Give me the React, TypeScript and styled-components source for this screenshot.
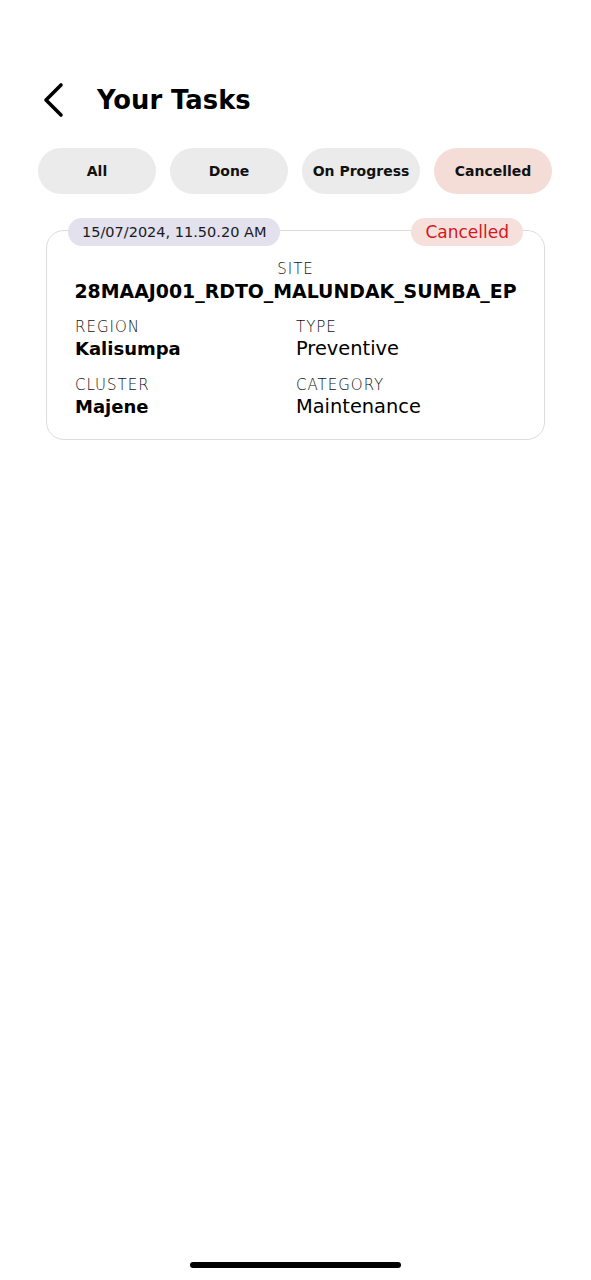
import React from "react";
import styled, { createGlobalStyle } from "styled-components";

const Global = createGlobalStyle`
  html, body { margin: 0; padding: 0; background: #ffffff; }
  body { font-family: "DejaVu Sans", "Liberation Sans", sans-serif; color: #000; }
`;

const Page = styled.div`
  width: 591px;
  height: 1280px;
  position: relative;
  display: flex;
  flex-direction: column;
  background: #fff;
  overflow: hidden;
`;

const Header = styled.div`
  display: flex;
  align-items: center;
  height: 40px;
  margin-top: 80px;
  padding-left: 40px;
  gap: 31px;
`;

const BackButton = styled.button`
  border: none;
  background: none;
  padding: 0;
  width: 26px;
  height: 40px;
  display: flex;
  align-items: center;
  justify-content: center;
`;

const Title = styled.h1`
  margin: 0;
  font-size: 25.8px;
  font-weight: 700;
`;

const Tabs = styled.div`
  display: flex;
  gap: 14px;
  padding: 0 39px 0 38px;
  margin-top: 28px;
`;

const Tab = styled.button<{ $active?: boolean }>`
  flex: 1;
  height: 46px;
  border: none;
  border-radius: 23px;
  background: ${(p) => (p.$active ? "#f3ddd6" : "#ebebeb")};
  font-family: "DejaVu Sans", sans-serif;
  font-weight: 700;
  font-size: 14px;
  color: #111;
  padding: 0;
`;

const Card = styled.div`
  margin: 36px 46px 0 46px;
  border: 1.5px solid #dcdcdc;
  border-radius: 18px;
  padding: 0 28px 20px 28px;
  display: flex;
  flex-direction: column;
`;

const CardTop = styled.div`
  display: flex;
  justify-content: space-between;
  margin: -13px -7px 0 -7px;
`;

const Pill = styled.span<{ $tone: "date" | "cancel" }>`
  height: 28px;
  border-radius: 14px;
  display: inline-flex;
  align-items: center;
  padding: 0 14px;
  background: ${(p) => (p.$tone === "date" ? "#e2e1ed" : "#f5e0db")};
  color: ${(p) => (p.$tone === "date" ? "#1a1a1a" : "#d7161e")};
  font-size: ${(p) => (p.$tone === "date" ? "14.5px" : "17px")};
`;

const Site = styled.div`
  display: flex;
  flex-direction: column;
  align-items: center;
  margin-top: 14px;
`;

const Label = styled.div`
  font-size: 15px;
  font-weight: 300;
  color: #111;
  letter-spacing: 1px;
  line-height: 18px;
`;

const SiteValue = styled.div`
  font-size: 18.9px;
  font-weight: 700;
  line-height: 26px;
  white-space: nowrap;
`;

const Grid = styled.div`
  display: grid;
  grid-template-columns: 221px 1fr;
  row-gap: 15px;
  margin-top: 14px;
`;

const Field = styled.div`
  display: flex;
  flex-direction: column;
`;

const Value = styled.div<{ $bold?: boolean }>`
  font-size: ${(p) => (p.$bold ? "18px" : "19.4px")};
  font-weight: ${(p) => (p.$bold ? 700 : 400)};
  line-height: 25px;
`;

const HomeIndicator = styled.div`
  position: absolute;
  left: 190px;
  bottom: 12px;
  width: 211px;
  height: 6px;
  border-radius: 3px;
  background: #000;
`;

const fields = [
  { label: "REGION", value: "Kalisumpa", bold: true },
  { label: "TYPE", value: "Preventive", bold: false },
  { label: "CLUSTER", value: "Majene", bold: true },
  { label: "CATEGORY", value: "Maintenance", bold: false },
];

export default function App() {
  return (
    <Page>
      <Global />
      <Header>
        <BackButton aria-label="back">
          <svg width="22" height="36" viewBox="0 0 22 36">
            <path d="M19 3 L4 18 L19 33" fill="none" stroke="#000" strokeWidth="3.6" strokeLinecap="round" strokeLinejoin="round" />
          </svg>
        </BackButton>
        <Title>Your Tasks</Title>
      </Header>
      <Tabs>
        <Tab>All</Tab>
        <Tab>Done</Tab>
        <Tab>On Progress</Tab>
        <Tab $active>Cancelled</Tab>
      </Tabs>
      <Card>
        <CardTop>
          <Pill $tone="date">15/07/2024, 11.50.20 AM</Pill>
          <Pill $tone="cancel">Cancelled</Pill>
        </CardTop>
        <Site>
          <Label>SITE</Label>
          <SiteValue>28MAAJ001_RDTO_MALUNDAK_SUMBA_EP</SiteValue>
        </Site>
        <Grid>
          {fields.map((f) => (
            <Field key={f.label}>
              <Label>{f.label}</Label>
              <Value $bold={f.bold}>{f.value}</Value>
            </Field>
          ))}
        </Grid>
      </Card>
      <HomeIndicator />
    </Page>
  );
}
